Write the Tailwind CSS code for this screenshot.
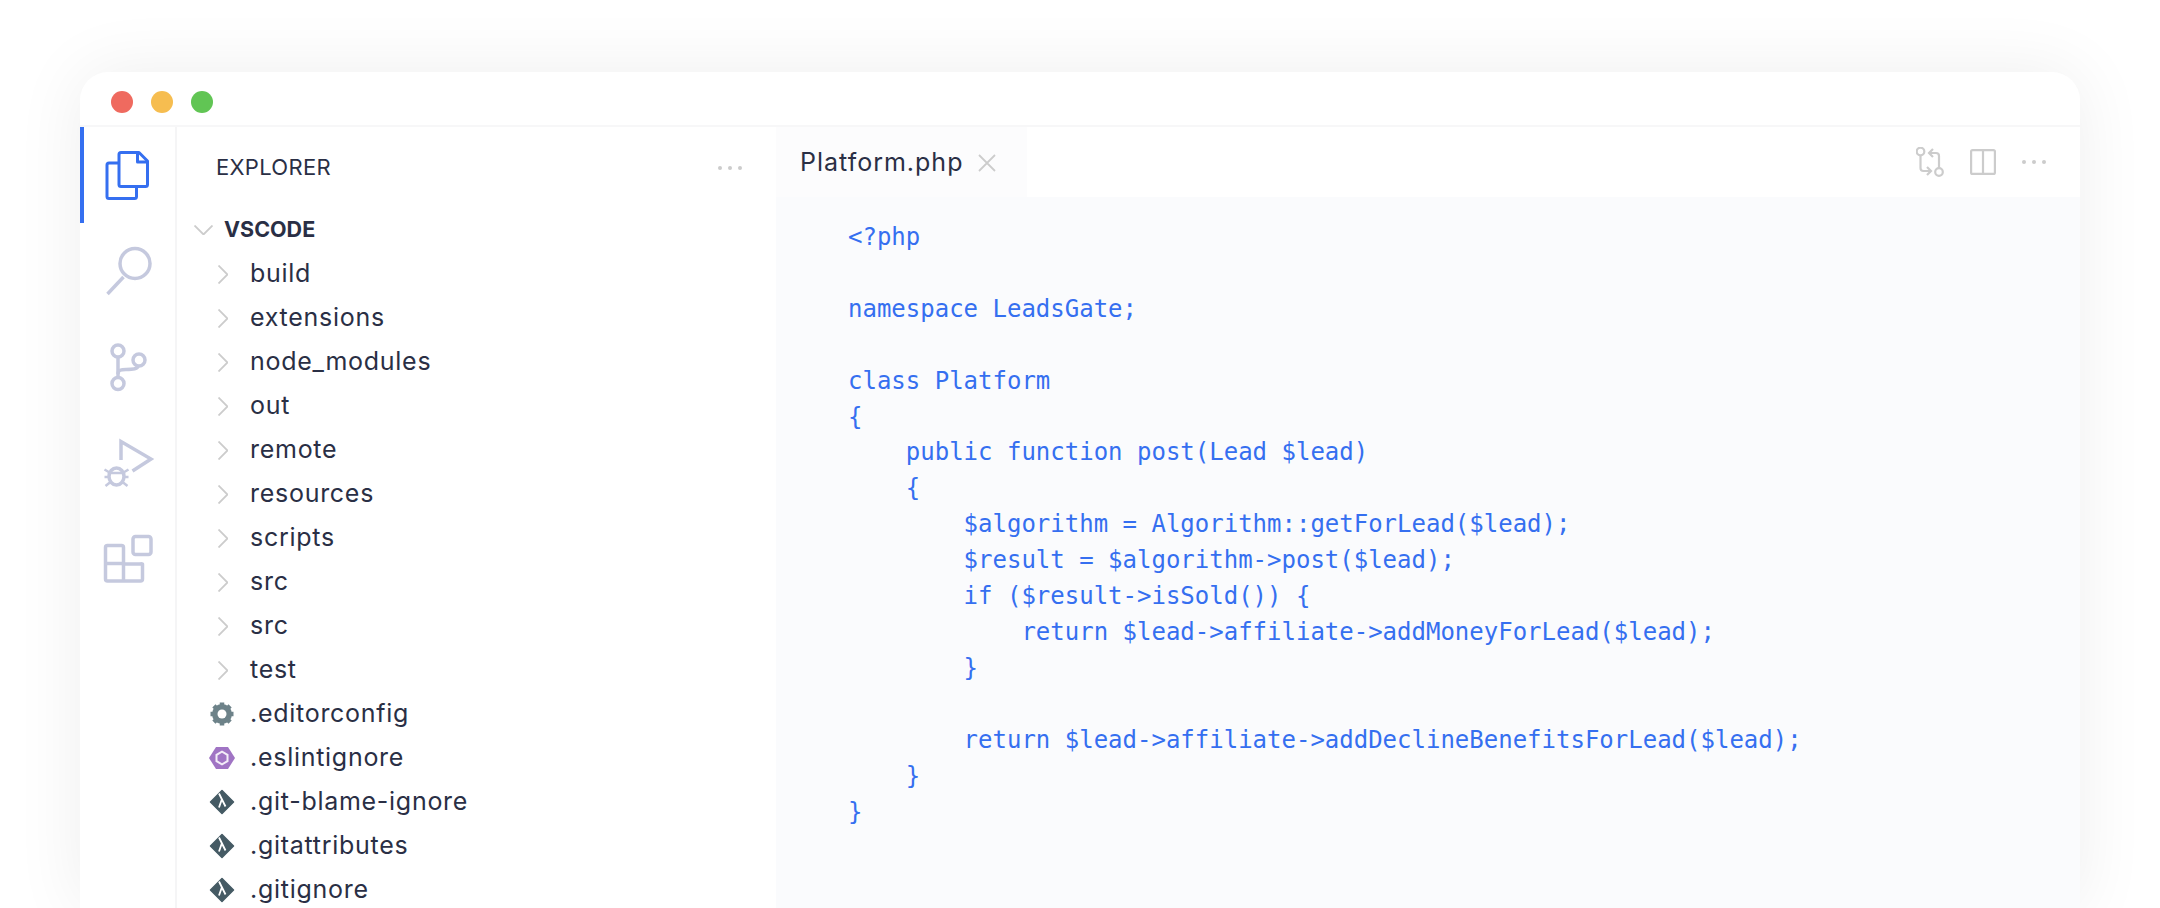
<!DOCTYPE html>
<html lang="en">
<head>
  <meta charset="UTF-8">
  <title>Platform.php</title>
  <script src="https://cdn.jsdelivr.net/npm/@tailwindcss/browser@4"></script>
</head>
<body class="bg-white h-[908px] overflow-hidden pt-[72px] px-[80px] font-['Inter','Liberation_Sans',sans-serif] text-[#2a2f45]">
  <div class="bg-white rounded-t-[28px] shadow-[0_0_70px_rgba(0,0,0,0.07)] h-[836px] w-[2000px] overflow-hidden">

    <!-- title bar -->
    <div class="h-[55px] flex items-center gap-[18px] pl-[31px] pt-[7px] border-b-2 border-[#f7f7f8]">
      <span class="w-[22px] h-[22px] rounded-full bg-[#ef6a5f]"></span>
      <span class="w-[22px] h-[22px] rounded-full bg-[#f6bd50]"></span>
      <span class="w-[22px] h-[22px] rounded-full bg-[#61c554]"></span>
    </div>

    <div class="flex h-[781px] overflow-hidden">
      <!-- activity bar -->
      <div class="w-[97px] shrink-0 border-r-2 border-[#f5f5f6] flex flex-col">
        <div class="h-[96px] border-l-4 border-[#356ff0] flex items-center justify-center pr-[4px]">
          <svg class="w-[56px] h-[56px]" viewBox="99.5 147 56 56" fill="none" stroke="#356ff0" stroke-width="3" stroke-linejoin="round">
            <path d="M118 163h-9.500a2 2 0 0 0-2 2v31.500a2 2 0 0 0 2 2H134a2 2 0 0 0 2-2V187"/>
            <path d="M121 152.500h17.500l8.500 8.500v23.500a2 2 0 0 1-2 2h-24.500a2 2 0 0 1-2-2V154.500a2 2 0 0 1 2-2z"/>
            <path d="M137 152.500v9.500h10"/>
          </svg>
        </div>
        <div class="h-[96px] flex items-center justify-center">
          <svg class="w-[56px] h-[56px]" viewBox="99.500 243 56 56" fill="none" stroke="#c5c9de" stroke-width="3.500">
            <circle cx="134.500" cy="263.500" r="15"/>
            <path d="M123 277l-16 17"/>
          </svg>
        </div>
        <div class="h-[96px] flex items-center justify-center">
          <svg class="w-[56px] h-[56px]" viewBox="99.500 339 56 56" fill="none" stroke="#c5c9de" stroke-width="3.500">
            <circle cx="117.500" cy="351" r="6"/>
            <circle cx="117.500" cy="383.500" r="6"/>
            <circle cx="138.500" cy="360" r="6"/>
            <path d="M117.500 357v20.500"/>
            <path d="M117.500 374c0-4 3-4.500 8-4.500 7 0 12-.500 12-4"/>
          </svg>
        </div>
        <div class="h-[96px] flex items-center justify-center">
          <svg class="w-[56px] h-[56px]" viewBox="99.500 435 56 56" fill="none" stroke="#c5c9de" stroke-width="3.500">
            <path d="M120.500 460v-18.500l30 17.500-18.500 12"/>
            <ellipse cx="116" cy="476.500" rx="7.500" ry="8.500"/>
            <path d="M108.500 473h15M104 469.500l5 3M128 469.500l-5 3M104 477h5M128 477h-5M105 486l5-4M127 486l-5-4" stroke-width="2.500"/>
          </svg>
        </div>
        <div class="h-[96px] flex items-center justify-center">
          <svg class="w-[56px] h-[56px]" viewBox="99.500 531 56 56" fill="none" stroke="#c5c9de" stroke-width="3.500" stroke-linejoin="round">
            <rect x="132.500" y="536.500" width="18" height="18" rx="2.500"/>
            <path d="M107 545.500h14a2 2 0 0 1 2 2V564h17a2 2 0 0 1 2 0v15a2 2 0 0 1-2 2h-33a2 2 0 0 1-2-2v-31.500a2 2 0 0 1 2-2z"/>
            <path d="M105 563.500h18v17"/>
          </svg>
        </div>
      </div>

      <!-- sidebar -->
      <div class="w-[599px] shrink-0">
        <div class="h-[81px] flex items-center justify-between pl-[39px] pr-[34px]">
          <span class="text-[22px] tracking-[0.3px]">EXPLORER</span>
          <svg class="w-[24px] h-[4px]" viewBox="0 0 24 4" fill="#cccccc"><circle cx="2" cy="2" r="2"/><circle cx="12" cy="2" r="2"/><circle cx="22" cy="2" r="2"/></svg>
        </div>
        <div class="h-[43px] flex items-center pl-[17px] gap-[11px]">
          <svg class="w-[19px] h-[10px]" viewBox="0 0 19 10" fill="none" stroke="#cccccc" stroke-width="1.800"><path d="M.500.500l9 9 9-9"/></svg>
          <span class="text-[21.500px] font-bold">VSCODE</span>
        </div>

        <div class="h-[44px] mt-[1px] flex items-center pl-[41px] gap-[22px] text-[25px] tracking-[0.72px]">
          <svg class="w-[10px] h-[19px]" viewBox="0 0 10 19" fill="none" stroke="#cccccc" stroke-width="1.800"><path d="M.500.500l9 9-9 9"/></svg>
          <span>build</span>
        </div>
        <div class="h-[44px] flex items-center pl-[41px] gap-[22px] text-[25px] tracking-[0.72px]">
          <svg class="w-[10px] h-[19px]" viewBox="0 0 10 19" fill="none" stroke="#cccccc" stroke-width="1.800"><path d="M.500.500l9 9-9 9"/></svg>
          <span>extensions</span>
        </div>
        <div class="h-[44px] flex items-center pl-[41px] gap-[22px] text-[25px] tracking-[0.72px]">
          <svg class="w-[10px] h-[19px]" viewBox="0 0 10 19" fill="none" stroke="#cccccc" stroke-width="1.800"><path d="M.500.500l9 9-9 9"/></svg>
          <span>node_modules</span>
        </div>
        <div class="h-[44px] flex items-center pl-[41px] gap-[22px] text-[25px] tracking-[0.72px]">
          <svg class="w-[10px] h-[19px]" viewBox="0 0 10 19" fill="none" stroke="#cccccc" stroke-width="1.800"><path d="M.500.500l9 9-9 9"/></svg>
          <span>out</span>
        </div>
        <div class="h-[44px] flex items-center pl-[41px] gap-[22px] text-[25px] tracking-[0.72px]">
          <svg class="w-[10px] h-[19px]" viewBox="0 0 10 19" fill="none" stroke="#cccccc" stroke-width="1.800"><path d="M.500.500l9 9-9 9"/></svg>
          <span>remote</span>
        </div>
        <div class="h-[44px] flex items-center pl-[41px] gap-[22px] text-[25px] tracking-[0.72px]">
          <svg class="w-[10px] h-[19px]" viewBox="0 0 10 19" fill="none" stroke="#cccccc" stroke-width="1.800"><path d="M.500.500l9 9-9 9"/></svg>
          <span>resources</span>
        </div>
        <div class="h-[44px] flex items-center pl-[41px] gap-[22px] text-[25px] tracking-[0.72px]">
          <svg class="w-[10px] h-[19px]" viewBox="0 0 10 19" fill="none" stroke="#cccccc" stroke-width="1.800"><path d="M.500.500l9 9-9 9"/></svg>
          <span>scripts</span>
        </div>
        <div class="h-[44px] flex items-center pl-[41px] gap-[22px] text-[25px] tracking-[0.72px]">
          <svg class="w-[10px] h-[19px]" viewBox="0 0 10 19" fill="none" stroke="#cccccc" stroke-width="1.800"><path d="M.500.500l9 9-9 9"/></svg>
          <span>src</span>
        </div>
        <div class="h-[44px] flex items-center pl-[41px] gap-[22px] text-[25px] tracking-[0.72px]">
          <svg class="w-[10px] h-[19px]" viewBox="0 0 10 19" fill="none" stroke="#cccccc" stroke-width="1.800"><path d="M.500.500l9 9-9 9"/></svg>
          <span>src</span>
        </div>
        <div class="h-[44px] flex items-center pl-[41px] gap-[22px] text-[25px] tracking-[0.72px]">
          <svg class="w-[10px] h-[19px]" viewBox="0 0 10 19" fill="none" stroke="#cccccc" stroke-width="1.800"><path d="M.500.500l9 9-9 9"/></svg>
          <span>test</span>
        </div>

        <div class="h-[44px] flex items-center pl-[31px] gap-[14px] text-[25px] tracking-[0.72px]">
          <svg class="w-[28px] h-[28px]" viewBox="0 0 28 28" fill="none">
            <circle cx="14" cy="14" r="7.500" stroke="#6d8289" stroke-width="5"/>
            <path d="M14 2.500v23M2.500 14h23M5.900 5.900l16.200 16.200M22.100 5.900L5.900 22.100" stroke="#6d8289" stroke-width="4.500"/>
            <circle cx="14" cy="14" r="4.500" fill="#ffffff"/>
          </svg>
          <span>.editorconfig</span>
        </div>
        <div class="h-[44px] flex items-center pl-[31px] gap-[14px] text-[25px] tracking-[0.72px]">
          <svg class="w-[28px] h-[28px]" viewBox="0 0 28 28">
            <path d="M8 3h12l7 11-7 11H8L1 14z" fill="#a074c4"/>
            <path d="M14 6.500l6.500 3.750v7.500L14 21.500l-6.500-3.750v-7.500z" fill="#f3ecf8"/>
            <path d="M14 8.800l4.500 2.600v5.200L14 19.200l-4.500-2.600v-5.200z" fill="#a074c4"/>
          </svg>
          <span>.eslintignore</span>
        </div>
        <div class="h-[44px] flex items-center pl-[31px] gap-[14px] text-[25px] tracking-[0.72px]">
          <svg class="w-[28px] h-[28px]" viewBox="0 0 28 28">
            <path d="M14 2.500L25.500 14 14 25.500 2.500 14z" fill="#455a64" stroke="#455a64" stroke-width="1.500" stroke-linejoin="round"/>
            <path d="M11 5.500l6.500 13M13.800 11.500l-2.800 8" stroke="#ffffff" stroke-width="1.800" fill="none"/>
          </svg>
          <span>.git-blame-ignore</span>
        </div>
        <div class="h-[44px] flex items-center pl-[31px] gap-[14px] text-[25px] tracking-[0.72px]">
          <svg class="w-[28px] h-[28px]" viewBox="0 0 28 28">
            <path d="M14 2.500L25.500 14 14 25.500 2.500 14z" fill="#455a64" stroke="#455a64" stroke-width="1.500" stroke-linejoin="round"/>
            <path d="M11 5.500l6.500 13M13.800 11.500l-2.800 8" stroke="#ffffff" stroke-width="1.800" fill="none"/>
          </svg>
          <span>.gitattributes</span>
        </div>
        <div class="h-[44px] flex items-center pl-[31px] gap-[14px] text-[25px] tracking-[0.72px]">
          <svg class="w-[28px] h-[28px]" viewBox="0 0 28 28">
            <path d="M14 2.500L25.500 14 14 25.500 2.500 14z" fill="#455a64" stroke="#455a64" stroke-width="1.500" stroke-linejoin="round"/>
            <path d="M11 5.500l6.500 13M13.800 11.500l-2.800 8" stroke="#ffffff" stroke-width="1.800" fill="none"/>
          </svg>
          <span>.gitignore</span>
        </div>
      </div>

      <!-- editor -->
      <div class="flex-1 flex flex-col min-w-0">
        <div class="h-[70px] shrink-0 flex items-center justify-between pr-[34px]">
          <div class="h-full w-[251px] bg-[#fcfcfd] flex items-center pl-[24px] pt-[2px] gap-[15px]">
            <span class="text-[25px] tracking-[1px]">Platform.php</span>
            <svg class="w-[18px] h-[18px]" viewBox="0 0 18 18" fill="none" stroke="#cccccc" stroke-width="1.800"><path d="M1 1l16 16M17 1L1 17"/></svg>
          </div>
          <div class="flex items-center gap-[26px]">
            <svg class="w-[28px] h-[30px]" viewBox="0 0 28 30" fill="none" stroke="#cccccc" stroke-width="2.200">
              <circle cx="4.500" cy="4.500" r="3.800"/>
              <circle cx="23" cy="25" r="3.800"/>
              <path d="M4.500 8.500V21a3 3 0 0 0 3 3H15"/>
              <path d="M11 20l4 4-4 4"/>
              <path d="M23 21V9a3 3 0 0 0-3-3h-7"/>
              <path d="M17 2l-4 4 4 4"/>
            </svg>
            <svg class="w-[26px] h-[26px]" viewBox="0 0 26 26" fill="none" stroke="#cccccc" stroke-width="2.200">
              <rect x="1.100" y="1.100" width="23.800" height="23.800" rx="1.500"/>
              <path d="M13 1v24"/>
            </svg>
            <svg class="w-[24px] h-[4px]" viewBox="0 0 24 4" fill="#cccccc"><circle cx="2" cy="2" r="2"/><circle cx="12" cy="2" r="2"/><circle cx="22" cy="2" r="2"/></svg>
          </div>
        </div>
        <pre class="flex-1 bg-[#fafbfd] pl-[72px] pt-[23px] font-['DejaVu_Sans_Mono',monospace] text-[24px] leading-[35.9px] text-[#356ff0]">&lt;?php

namespace LeadsGate;

class Platform
{
    public function post(Lead $lead)
    {
        $algorithm = Algorithm::getForLead($lead);
        $result = $algorithm-&gt;post($lead);
        if ($result-&gt;isSold()) {
            return $lead-&gt;affiliate-&gt;addMoneyForLead($lead);
        }

        return $lead-&gt;affiliate-&gt;addDeclineBenefitsForLead($lead);
    }
}</pre>
      </div>
    </div>
  </div>
</body>
</html>
